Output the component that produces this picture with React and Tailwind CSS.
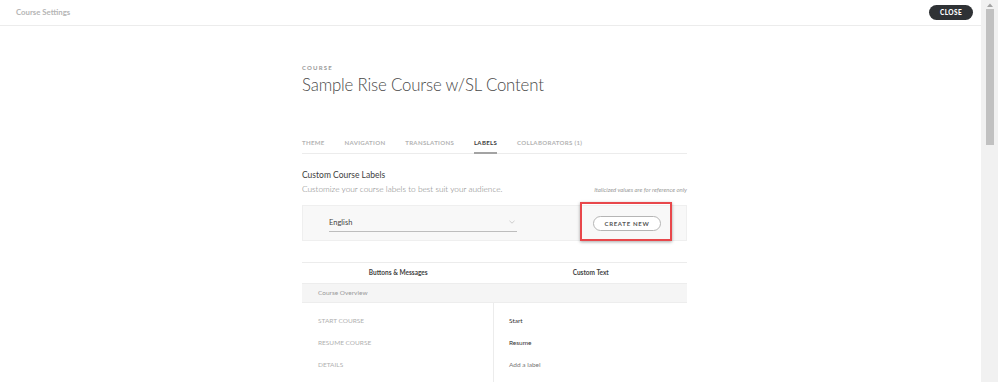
export default function App() {
  const tabs = [
    { t: "THEME", active: false },
    { t: "NAVIGATION", active: false },
    { t: "TRANSLATIONS", active: false },
    { t: "LABELS", active: true },
    { t: "COLLABORATORS (1)", active: false },
  ];
  const rows = [
    ["START COURSE", "Start"],
    ["RESUME COURSE", "Resume"],
    ["DETAILS", "Add a label"],
  ];
  return (
    <div className="flex h-[382px] w-[998px] overflow-hidden bg-white" style={{ fontFamily: "Lato, 'Open Sans', sans-serif" }}>
      <div className="flex min-w-0 flex-1 flex-col">
        <header className="flex h-[26px] shrink-0 items-center justify-between border-b border-[#ececec] pl-[16px] pr-[8px]">
          <span className="text-[7.8px] font-bold text-[#b5b5b5]">Course Settings</span>
          <button className="flex h-[15px] w-[44px] items-center justify-center rounded-full bg-[#2f3235] text-[6.5px] font-black tracking-[0.06em] text-white">CLOSE</button>
        </header>
        <main className="ml-[302px] flex w-[385px] flex-col">
          <div className="mt-[37px] text-[6px] font-bold tracking-[0.2em] text-[#9a9a9a]">COURSE</div>
          <h1 className="mt-[2px] text-[16.8px] font-light leading-[22px] tracking-[-0.01em] text-[#4a4a4a]">Sample Rise Course w/SL Content</h1>
          <nav className="mt-[42px] flex border-b border-[#ececec] text-[6.1px] font-bold tracking-[0.05em]">
            {tabs.map((tab, i) => (
              <div
                key={i}
                className={
                  (tab.active ? "border-[#a3a3a3] text-[#3c3c3c] " : "border-transparent text-[#b3b3b3] ") +
                  "mr-[19.8px] -mb-px border-b-[2px] pb-[5px]"
                }
              >
                {tab.t}
              </div>
            ))}
          </nav>
          <div className="mt-[15px] text-[8.5px] text-[#3d3d3d]">Custom Course Labels</div>
          <div className="mt-[1px] flex items-center justify-between">
            <span className="text-[8.3px] font-light text-[#7a7a7a]">Customize your course labels to best suit your audience.</span>
            <span className="text-[6px] italic text-[#9b9b9b]">Italicized values are for reference only</span>
          </div>
          <div className="mt-[10px] flex h-[36px] items-center border border-[#efefef] bg-[#f8f8f8] pl-[26px]">
            <div className="flex h-[17px] w-[188px] items-center justify-between border-b border-[#bdbdbd] pb-[1px] pr-[2px]">
              <span className="text-[7.5px] text-[#444]">English</span>
              <svg width="6" height="4" viewBox="0 0 6 4" fill="none">
                <path d="M0.5 0.8 L3 3.2 L5.5 0.8" stroke="#bbb" strokeWidth="0.7" />
              </svg>
            </div>
            <div className="relative ml-[76px]">
              <button className="flex h-[15px] w-[68px] items-center justify-center rounded-full border border-[#b5b5b5] bg-white text-[6px] font-bold tracking-[0.12em] text-[#555]">CREATE NEW</button>
              <div className="pointer-events-none absolute left-[-13px] top-[-14px] h-[39px] w-[92px] border-[2px] border-[#e8474b] shadow-[0_1px_3px_rgba(0,0,0,0.35)]" />
            </div>
          </div>
          <div className="mt-[21px] flex h-[21px] items-center border-t border-[#ececec] text-[6.5px] font-bold text-[#444]">
            <div className="flex-1 text-center">Buttons &amp; Messages</div>
            <div className="flex-1 text-center">Custom Text</div>
          </div>
          <div className="flex h-[20px] items-center border-y border-[#ededed] bg-[#f5f5f5] pl-[16px] text-[6.5px] text-[#9a9a9a]">Course Overview</div>
          <div className="flex">
            <div className="w-[192px] border-r border-[#ececec] pt-[7px] pb-[10px]">
              {rows.map((r, i) => (
                <div key={i} className="flex h-[22px] items-center pl-[16px] text-[6.5px] text-[#b0b0b0]">{r[0]}</div>
              ))}
            </div>
            <div className="flex-1 pt-[7px]">
              {rows.map((r, i) => (
                <div key={i} className={(i === 2 ? "text-[#777] " : "text-[#333] ") + "flex h-[22px] items-center pl-[15px] text-[6.5px]"}>{r[1]}</div>
              ))}
            </div>
          </div>
        </main>
      </div>
      <div className="flex h-full w-[17px] shrink-0 flex-col items-center bg-[#f1f1f1]">
        <div className="flex h-[9px] w-full items-center justify-center">
          <svg width="6" height="4" viewBox="0 0 6 4">
            <path d="M0 4 L3 0.5 L6 4 Z" fill="#a3a3a3" />
          </svg>
        </div>
        <div className="h-[136px] w-[8px] bg-[#c1c1c1]" />
      </div>
    </div>
  );
}
